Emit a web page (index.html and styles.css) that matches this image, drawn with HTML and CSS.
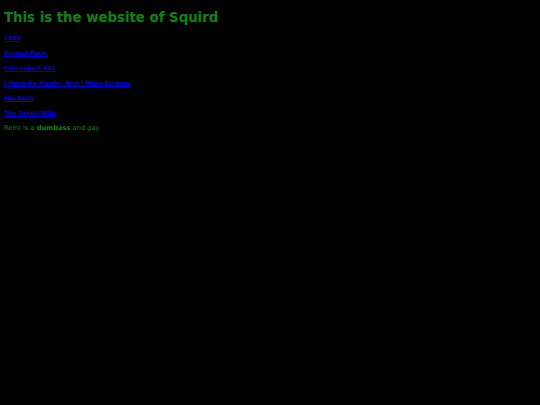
FILE: index.html
```html
<!DOCTYPE html>
<html>
<head>
<meta charset="utf-8">
<link rel="stylesheet" href="styles.css">
</head>
<body>
<h1 class="title">This is the website of Squird</h1>
<p class="item"><a href="#">1984</a></p>
<p class="item"><a href="#">Animal Farm</a></p>
<p class="item"><a href="#">Fahrenheit 451</a></p>
<p class="item"><a href="#">I Have No Mouth, And I Must Scream</a></p>
<p class="item"><a href="#">Macbeth</a></p>
<p class="item"><a href="#">The Green Mile</a></p>
<p class="item note">Remi is a <b>dumbass</b> and <i>gay</i></p>
</body>
</html>
```
FILE: styles.css
```css
html, body {
  background: #000;
}
body {
  margin: 4px;
  font-family: "DejaVu Sans", Verdana, sans-serif;
  color: #108410;
}
.title {
  font-size: 13.3px;
  line-height: 17px;
  margin: 5px 0 8px;
  color: #108410;
}
.item {
  font-size: 6.7px;
  line-height: 8px;
  margin: 7px 0;
}
.item a {
  color: #0000cc;
  font-weight: bold;
  font-size: 6.1px;
}
.note {
  color: #108410;
}
```
